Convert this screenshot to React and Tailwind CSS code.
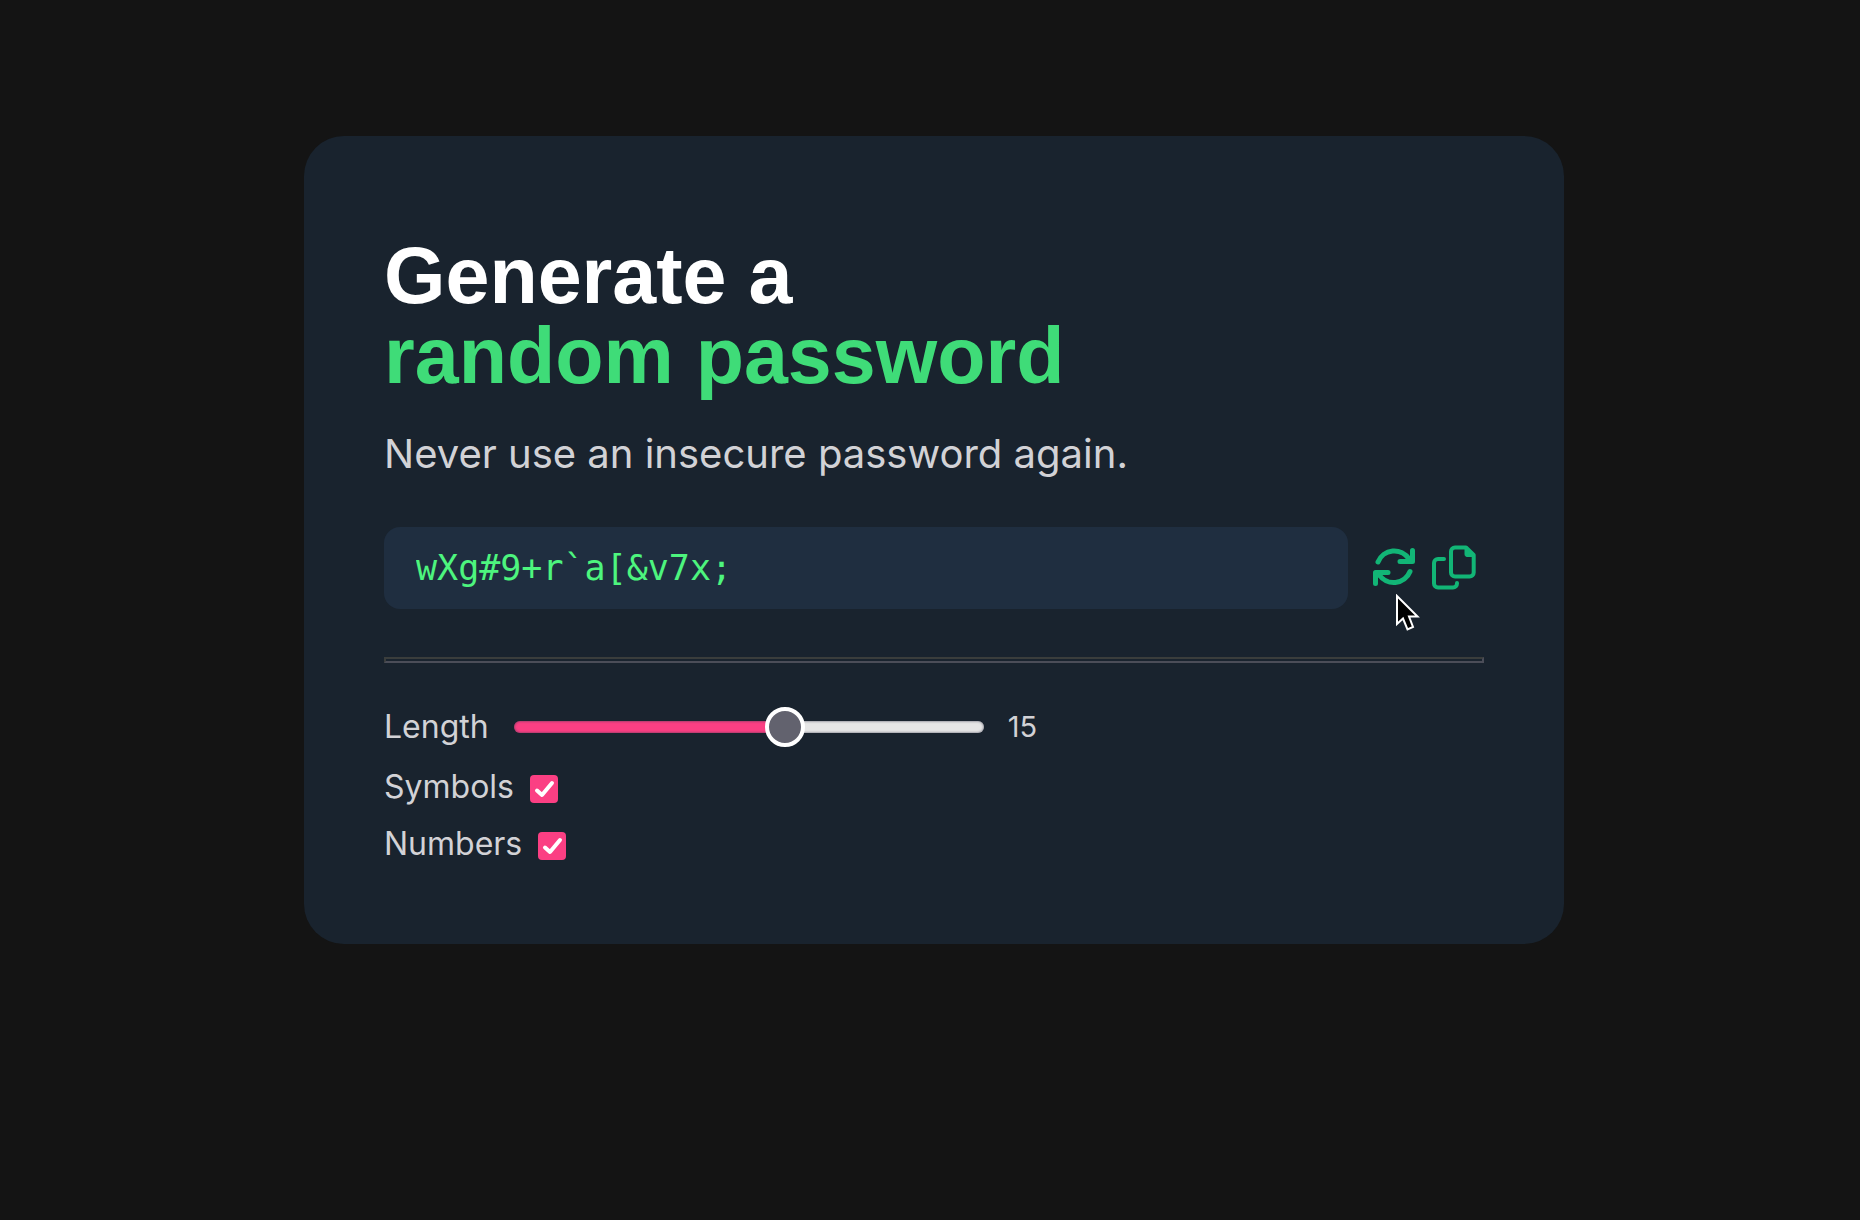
import React, { useState } from "react";

const MIN = 1;
const MAX = 25;

function RefreshIcon() {
  return (
    <svg viewBox="0 0 44 44" className="size-11" fill="none" stroke="currentColor" strokeWidth="5" strokeLinecap="round" strokeLinejoin="round" aria-hidden="true">
      <path d="M6 16A17.500 17.500 0 0 1 37 13" />
      <path d="M40.500 4.500V15.500H28" />
      <path d="M38 25.500A17.500 17.500 0 0 1 7 28.500" />
      <path d="M3.500 37.500V26.500H16" />
      <path d="M40 10V15H32L36 11ZM4 32V27H12L8 30Z" fill="currentColor" strokeWidth="1" />
    </svg>
  );
}

function CopyIcon() {
  return (
    <svg viewBox="0 0 46 46" className="size-[46px]" fill="none" stroke="currentColor" strokeWidth="4" strokeLinecap="round" strokeLinejoin="round" aria-hidden="true">
      <path d="M25 2.500H36L43.700 10V27.500a4 4 0 0 1-4 4H25a4 4 0 0 1-4-4V6.500a4 4 0 0 1 4-4Z" />
      <path d="M35 2.500V9.500a2 2 0 0 0 2 2H43.500V10L36 2.500Z" fill="currentColor" strokeWidth="1" />
      <path d="M14 14H8a4 4 0 0 0-4 4V38.500a4 4 0 0 0 4 4H23a4 4 0 0 0 4-4V38" />
    </svg>
  );
}

function Pointer() {
  return (
    <svg viewBox="0 0 24 37" className="pointer-events-none absolute top-12 left-6 h-[37px] w-6" aria-hidden="true">
      <path d="M1 2V30L7 24.500L11.500 35.500L17 33L13 22.500H21.500Z" fill="#000" stroke="#fff" strokeWidth="2" />
    </svg>
  );
}

function Toggle({ id, label, checked, onChange }) {
  return (
    <div className="flex items-center gap-4">
      <label htmlFor={id}>{label}</label>
      <span className="relative mt-1 flex">
        <input id={id} type="checkbox" checked={checked} onChange={(e) => onChange(e.target.checked)} className="peer size-7 appearance-none rounded-sm bg-white checked:bg-[#fb3f83]" />
        <svg viewBox="0 0 28 28" className="pointer-events-none absolute inset-0 hidden size-7 peer-checked:block" fill="none" stroke="#fff" strokeWidth="4" strokeLinecap="round" strokeLinejoin="round" aria-hidden="true">
          <path d="M7 15.500L12 20L22 8" />
        </svg>
      </span>
    </div>
  );
}

export default function App() {
  const [length, setLength] = useState(15);
  const [symbols, setSymbols] = useState(true);
  const [numbers, setNumbers] = useState(true);
  const ratio = (length - MIN) / (MAX - MIN);
  const fill = `calc(20px + (100% - 40px) * ${ratio})`;

  return (
    <div className="min-h-screen bg-[#141414] pt-[136px] pr-[296px] pl-[304px] font-['Inter',sans-serif] text-[#d2d2d6]">
      <main className="mx-auto max-w-[1260px] rounded-[40px] bg-[#19232e] px-20 pt-[100px] pb-[76px]">
        <h1 className="font-['Liberation_Sans',sans-serif] text-[79px] leading-[80px] font-bold text-white">
          Generate a
          <span className="block text-[#3fdc78]">random password</span>
        </h1>
        <p className="mt-[34px] text-[40px] leading-[48px]">Never use an insecure password again.</p>

        <div className="mt-[49px] flex items-center">
          <input readOnly aria-label="Generated password" value="wXg#9+r`a[&v7x;" className="h-[82px] min-w-0 flex-1 rounded-2xl bg-[#1f2e40] px-8 font-['DejaVu_Sans_Mono',monospace] text-[35px] text-[#4df57e] outline-none" />
          <div className="ml-6 flex items-center gap-[14px] pr-2 text-[#12b576]">
            <div className="relative">
              <button type="button" aria-label="Generate a new password" className="block"><RefreshIcon /></button>
              <Pointer />
            </div>
            <button type="button" aria-label="Copy password" className="block"><CopyIcon /></button>
          </div>
        </div>

        <hr className="mt-12 h-[6px] border-2 border-t-[#3a3d3c] border-r-[#4b4d58] border-b-[#4b4d58] border-l-[#3a3d3c]" />

        <div className="mt-10 text-[32px] leading-[48px]">
          <div className="flex items-center">
            <label htmlFor="length">Length</label>
            <input
              id="length" type="range" min={MIN} max={MAX} value={length}
              onChange={(e) => setLength(Number(e.target.value))}
              style={{ "--fill": fill }}
              className="ml-[25px] h-3 w-[470px] appearance-none rounded-full bg-[linear-gradient(to_right,#fb3f83_var(--fill),#e6e6e6_var(--fill))] shadow-[inset_0_0_2px_1px_rgba(60,60,80,0.4)] [&::-webkit-slider-thumb]:size-10 [&::-webkit-slider-thumb]:appearance-none [&::-webkit-slider-thumb]:rounded-full [&::-webkit-slider-thumb]:border-4 [&::-webkit-slider-thumb]:border-white [&::-webkit-slider-thumb]:bg-[#62626e]"
            />
            <output htmlFor="length" className="ml-6 text-[29px]">{length}</output>
          </div>
          <div className="mt-3"><Toggle id="symbols" label="Symbols" checked={symbols} onChange={setSymbols} /></div>
          <div className="mt-[9px]"><Toggle id="numbers" label="Numbers" checked={numbers} onChange={setNumbers} /></div>
        </div>
      </main>
    </div>
  );
}
